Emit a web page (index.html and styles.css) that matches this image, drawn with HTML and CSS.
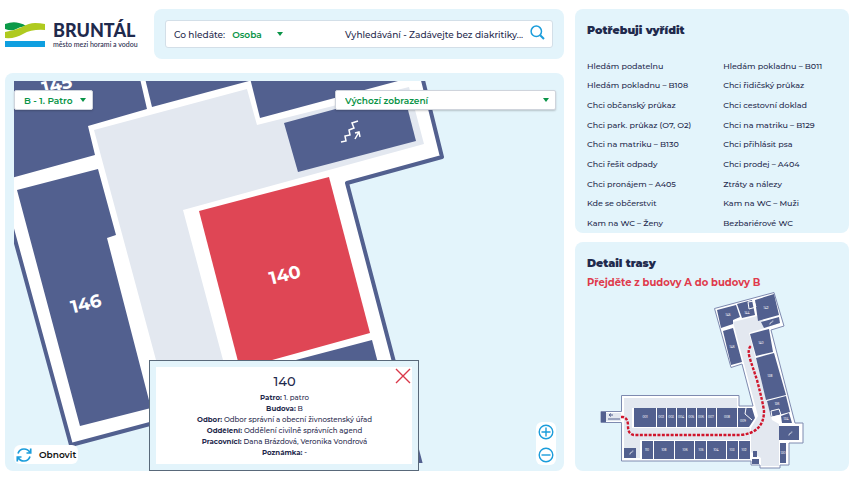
FILE: index.html
```
<!DOCTYPE html>
<html lang="cs">
<head>
    <meta charset="UTF-8">
    <meta name="viewport" content="width=device-width, initial-scale=1.0">
    <title>Bruntál - navigace</title>
    <link rel="stylesheet" href="styles.css">
</head>
<body>
    <div class="layout">
        <div class="left-side">
            <header class="main-header">
                <a href="index.html" class="logo">
                    <svg class="logo-mark" viewBox="0 0 40 25" aria-hidden="true">
                        <path d="M0 2Q8-1 14 1Q19 2 21 4Q14 5 9 8Q5 9 0 7Z" fill="#0b9a48"/>
                        <path d="M0 10Q9 9 17 5Q24 1 30 1Q35 1 40 2V8Q27 7 18 12Q10 17 0 16Z" fill="#afca1f"/>
                        <path d="M0 19H40V25H0Z" fill="#0f9fe0"/>
                    </svg>
                    <span class="logo-text">
                        <span class="brand-name">BRUNTÁL</span>
                        <span class="brand-claim">město mezi horami a vodou</span>
                    </span>
                </a>
                <div class="panel search-panel">
                    <form class="search">
                        <label for="searchType">Co hledáte:</label>
                        <span class="select-wrap search-type">
                            <select id="searchType">
                                <option>Osoba</option>
                            </select>
                        </span>
                        <input type="text" id="searchText" aria-label="Vyhledávání" placeholder="Vyhledávání - Zadávejte bez diakritiky...">
                        <button type="submit" class="icon-btn" aria-label="Hledat">
                            <svg width="15" height="15" viewBox="0 0 15 15" fill="none" stroke="#1b9ddb">
                                <circle cx="6.3" cy="6.3" r="5.2" stroke-width="1.5"/>
                                <path d="M10.2 10.2L14 14" stroke-width="2"/>
                            </svg>
                        </button>
                    </form>
                </div>
            </header>

            <main class="panel map-panel">
                <svg class="map" viewBox="14 81 542 382" preserveAspectRatio="xMidYMid slice" role="img" aria-label="Mapa patra">
                    <path class="wall" d="M-34 60L71 445L150 424L200 411L214 480H425L347 183L442 157L418 60Z"/>
                    <!-- corridor -->
                    <path class="floor" d="M94 130L247 89L257 125L409 87L424 144L183 210L223 360L240 420H172L156 360Z"/>
                    <!-- rooms -->
                    <path class="room" d="M0 70H138L147 109L88 126L95 155L0 181Z"/>
                    <path class="room" d="M143 70L152 107L290 70Z"/>
                    <path class="room" d="M248 70L260 118L398 81V70Z"/>
                    <path class="room" d="M284 123L402 91L408 110L416 141L298 172Z"/>
                    <path class="room" d="M17 190L98 169L116 235L107 238L151 408L80 426Z"/>
                    <path class="room selected" d="M199 211L329 177L370 333L240 369Z"/>
                    <path class="room" d="M243 374L372 340L404 463H270Z"/>
                    <path class="stairs" d="M341 142L346 141L345 136L350 135L349 130L354 128L352 123L358 121M355 139L359 132M355 133L359 132L360 137"/>
                    <text class="room-no" transform="translate(57 85) rotate(-14)">145</text>
                    <text class="room-no" transform="translate(86 304) rotate(-14)">146</text>
                    <text class="room-no" transform="translate(285 275) rotate(-14)">140</text>
                </svg>

                <span class="select-wrap floor-select">
                    <select aria-label="Patro">
                        <option>B - 1. Patro</option>
                    </select>
                </span>
                <span class="select-wrap view-select">
                    <select aria-label="Zobrazení">
                        <option>Výchozí zobrazení</option>
                    </select>
                </span>

                <button type="button" class="reset-btn">
                    <svg width="16" height="16" viewBox="0 0 16 16" fill="none" stroke="#1b9ddb" stroke-width="1.7">
                        <path d="M2 6.5Q3.500 2 8 2Q12 2 14 5.500M14.700 1.500V6H10.500M14 9.500Q12.500 14 8 14Q4 14 2 10.500M1.300 14.500V10H5.500"/>
                    </svg>
                    Obnovit
                </button>

                <div class="zoom-btns">
                    <button type="button" class="icon-btn" aria-label="Přiblížit">
                        <svg width="16" height="16" viewBox="0 0 16 16" fill="none" stroke="#1b9ddb" stroke-width="1.4">
                            <circle cx="8" cy="8" r="6.800"/>
                            <path d="M3.500 8H12.500M8 3.500V12.500"/>
                        </svg>
                    </button>
                    <button type="button" class="icon-btn" aria-label="Oddálit">
                        <svg width="16" height="16" viewBox="0 0 16 16" fill="none" stroke="#1b9ddb" stroke-width="1.4">
                            <circle cx="8" cy="8" r="6.800"/>
                            <path d="M3.500 8H12.500"/>
                        </svg>
                    </button>
                </div>

                <div class="popup">
                    <div class="popup-body">
                        <button type="button" class="icon-btn close-btn" aria-label="Zavřít">
                            <svg width="16" height="16" viewBox="0 0 16 16" stroke="#d9384a" stroke-width="1.4">
                                <path d="M1 1L15 15M15 1L1 15"/>
                            </svg>
                        </button>
                        <h2>140</h2>
                        <p><b>Patro:</b> 1. patro</p>
                        <p><b>Budova:</b> B</p>
                        <p><b>Odbor:</b> Odbor správní a obecní živnostenský úřad</p>
                        <p><b>Oddělení:</b> Oddělení civilně správních agend</p>
                        <p><b>Pracovníci:</b> Dana Brázdová, Veronika Vondrová</p>
                        <p><b>Poznámka:</b> -</p>
                    </div>
                </div>
            </main>
        </div>

        <aside class="right-side">
            <section class="panel side-panel">
                <h2>Potřebuji vyřídit</h2>
                <ul class="link-list">
                    <li><a href="#">Hledám podatelnu</a></li>
                    <li><a href="#">Hledám pokladnu – B011</a></li>
                    <li><a href="#">Hledám pokladnu – B108</a></li>
                    <li><a href="#">Chci řidičský průkaz</a></li>
                    <li><a href="#">Chci občanský průkaz</a></li>
                    <li><a href="#">Chci cestovní doklad</a></li>
                    <li><a href="#">Chci park. průkaz (O7, O2)</a></li>
                    <li><a href="#">Chci na matriku – B129</a></li>
                    <li><a href="#">Chci na matriku – B130</a></li>
                    <li><a href="#">Chci přihlásit psa</a></li>
                    <li><a href="#">Chci řešit odpady</a></li>
                    <li><a href="#">Chci prodej – A404</a></li>
                    <li><a href="#">Chci pronájem – A405</a></li>
                    <li><a href="#">Ztráty a nálezy</a></li>
                    <li><a href="#">Kde se občerstvit</a></li>
                    <li><a href="#">Kam na WC – Muži</a></li>
                    <li><a href="#">Kam na WC – Ženy</a></li>
                    <li><a href="#">Bezbariérové WC</a></li>
                </ul>
            </section>

            <section class="panel side-panel">
                <h2>Detail trasy</h2>
                <p class="route-step">Přejděte z budovy A do budovy B</p>
                <svg class="route-map" viewBox="587 292 250 178" role="img" aria-label="Trasa">
                    <path class="outline" d="M714.500 308.500L774 292.500L784 326L771 330L795 423H803V443H789V465H780V468H760V465H751V461H621.500V422.500H601V411.500H621.500V395.500H739V406H753L742 364L731 367.500Z"/>
                    <path class="floor" d="M606 413H621V421H606ZM624 398H737V408H624ZM624 398H632V445H624ZM624 428H750V440H640V458H624ZM733 322L757 316L765 322L780 323L749 333L772 420L779 424V466H761V458L751 452V428L758 416Z"/>
                    <g class="room">
                        <path d="M601 412H606V422H601ZM634 408H656V427H634ZM657 408H666V427H657ZM667 408H676V427H667ZM677 408H686V427H677ZM687 408H696V427H687ZM697 408H706V427H697ZM707 408H716V427H707ZM717 408H737V427H717ZM738 408H752L755 418L749 427H738Z"/>
                        <path d="M624 448H636V458H624ZM642 441H653V459H642ZM654 441H674V459H654ZM675 441H694V459H675ZM695 441H706V459H695ZM707 441H726V459H707ZM727 441H738V459H727ZM739 441H750V459H739Z"/>
                        <path d="M717 310L736 305L740 317L733 320V324L721 328ZM737 304L752 300L755 315L742 318ZM755 300L774 294L779 315L758 321ZM761 322L779 317L780 323L764 328ZM723 331L733 328L742 362L731 365ZM750 334L769 329L773 352L756 356ZM756 358L774 353L786 395L766 400ZM767 401L786 396L790 412L771 417ZM781 416L789 413L792 423H782Z"/>
                        <path d="M779 426H799V440H779ZM780 443H786V463H780ZM752 459H759V464H752ZM753 451H757V457H753Z"/>
                    </g>
                    <path class="divider" d="M748 302L754 301L756 307L749 309ZM771 411L779 409L781 415L772 417ZM746 408L745 414L752 420"/>
                    <g class="room-tag">
                        <text x="645" y="418">001</text>
                        <text x="661" y="418">002</text>
                        <text x="671" y="418">003</text>
                        <text x="681" y="418">004</text>
                        <text x="691" y="418">005</text>
                        <text x="701" y="418">006</text>
                        <text x="711" y="418">007</text>
                        <text x="727" y="418">008</text>
                        <text x="743" y="422">009</text>
                        <text x="647" y="451">110</text>
                        <text x="664" y="451">108</text>
                        <text x="685" y="451">106</text>
                        <text x="701" y="451">105</text>
                        <text x="716" y="451">104</text>
                        <text x="732" y="451">103</text>
                        <text x="744" y="451">102</text>
                        <text x="728" y="316">145</text>
                        <text x="747" y="314">144</text>
                        <text x="766" y="309">142</text>
                        <text x="732" y="348">146</text>
                        <text x="761" y="344">140</text>
                        <text x="770" y="377">138</text>
                        <text x="777" y="405">136</text>
                        <text x="786" y="420">134</text>
                        <text x="783" y="454">130</text>
                    </g>
                    <path class="stairs-small" d="M788 435h1.500v-1.500h1.500v-1.500h1.500M629 454h1.500v-1.500h1.500v-1.500h1.500M769 324h1.500v-1.500h1.500v-1.500h1.500"/>
                    <path class="entry-arrow" d="M613 415H609M611 413.500L609 415L611 416.500M608 419H620"/>
                    <path class="route" d="M621 417H623Q628 418 628 426Q628 435 635 435H740Q764 433 764 411Q763 403 757 380L750 359Q747 349 751 346"/>
                </svg>
            </section>
        </aside>
    </div>
</body>
</html>
```
FILE: styles.css
```
* {
    box-sizing: border-box;
}

body {
    font-family: Montserrat, Inter, sans-serif;
    font-size: 9px;
    font-weight: 500;
    margin: 0;
    color: #1f2a4d;
    background-color: #fff;
}

button, input, select {
    font: inherit;
    color: inherit;
    margin: 0;
    padding: 0;
    border: none;
    background: none;
}

a {
    color: inherit;
    text-decoration: none;
}

svg {
    display: block;
}

.layout {
    display: grid;
    grid-template-columns: 204fr 100fr;
    gap: 11px;
    min-height: 100vh;
    padding: 9px 5px;
}

.left-side {
    display: flex;
    flex-direction: column;
    gap: 14px;
}

.right-side {
    display: grid;
    grid-template-rows: 224fr 229fr;
    gap: 9px;
}

.panel {
    background-color: #e3f4fb;
    border-radius: 8px;
}

/* header */
.main-header {
    display: flex;
    gap: 20px;
}

.logo {
    display: flex;
    align-items: center;
    gap: 8px;
    width: 129px;
}

.logo-mark {
    width: 40px;
    height: 25px;
    flex-shrink: 0;
}

.logo-text {
    font-family: Lato, sans-serif;
    white-space: nowrap;
}

.brand-name {
    display: block;
    font-size: 18px;
    line-height: 20px;
    font-weight: 900;
}

.brand-claim {
    display: block;
    font-size: 7px;
    line-height: 9px;
}

.search-panel {
    flex: 1;
    padding: 11px;
}

.search {
    display: flex;
    align-items: center;
    height: 28px;
    padding: 0 7px 0 8px;
    border: 1px solid #d3dfe8;
    border-radius: 3px;
    background-color: #fff;
}

.search input {
    flex: 1;
    min-width: 0;
    text-align: right;
    outline: none;
}

.search input::placeholder {
    color: inherit;
    opacity: 1;
}

.search .icon-btn {
    margin: 0 0 3px 7px;
}

/* selects with green arrow */
.select-wrap {
    display: flex;
    align-items: center;
    color: #0a9447;
    font-weight: 600;
}

.select-wrap select {
    appearance: none;
    width: 100%;
    height: 100%;
    outline: none;
}

.select-wrap::after {
    content: "";
    flex-shrink: 0;
    border: 3px solid transparent;
    border-top: 4px solid #0a9447;
    border-bottom: none;
}

.search-type {
    width: 51px;
    margin-left: 7px;
}

.icon-btn {
    cursor: pointer;
}

/* map */
.map-panel {
    position: relative;
    flex: 1;
    display: flex;
    padding: 8px 8px 8px 9px;
}

.map {
    flex: 1;
    width: 100%;
    height: 100%;
    min-width: 0;
}

.wall {
    fill: #fff;
    stroke: #52608f;
    stroke-width: 4;
    stroke-linejoin: round;
}

.floor {
    fill: #e3e8f0;
}

.room {
    fill: #52608f;
}

.room.selected {
    fill: #df4655;
}

.room-no {
    fill: #fff;
    font-size: 18px;
    font-weight: 700;
    text-anchor: middle;
    dominant-baseline: central;
}

.stairs {
    fill: none;
    stroke: #fff;
    stroke-width: 1.5;
}

.floor-select, .view-select {
    position: absolute;
    top: 17px;
    height: 20px;
    padding: 0 6px 0 9px;
    border: 1px solid #cfd4dc;
    border-radius: 2px;
    background-color: #fff;
    box-shadow: 0 1px 2px rgba(0, 0, 0, 0.2);
}

.floor-select {
    left: 9px;
    width: 79px;
}

.view-select {
    right: 8px;
    width: 221px;
}

.reset-btn {
    position: absolute;
    left: 9px;
    bottom: 7px;
    display: flex;
    align-items: center;
    gap: 7px;
    height: 19px;
    padding: 0 2px;
    border-radius: 6px;
    background-color: #fff;
    color: #111;
    font-weight: 600;
}

.zoom-btns {
    position: absolute;
    right: 8px;
    bottom: 6px;
    display: flex;
    flex-direction: column;
    gap: 7px;
    padding: 2px;
    border-radius: 6px;
    background-color: #fff;
}

.popup {
    position: absolute;
    left: 0;
    right: 0;
    bottom: 0;
    width: 270px;
    margin: 0 auto;
    padding: 6px;
    border: 1px solid #59697a;
    background-color: #e3f4fb;
}

.popup-body {
    position: relative;
    padding: 6px 0;
    background-color: #fff;
    text-align: center;
    font-size: 7px;
    font-weight: 500;
}

.popup-body h2 {
    margin: 0 0 3px;
    font-size: 13px;
    line-height: 16px;
    font-weight: 500;
}

.popup-body p {
    margin: 0;
    line-height: 11px;
}

.close-btn {
    position: absolute;
    top: 1px;
    right: 1px;
}

/* right side */
.side-panel {
    display: flex;
    flex-direction: column;
    padding-left: 12px;
}

.side-panel h2 {
    margin: 13px 0 0;
    font-size: 11px;
    line-height: 16px;
    font-weight: 900;
}

.link-list {
    flex: 1;
    display: grid;
    grid-template-columns: 52% 48%;
    align-items: center;
    margin: 18px 0 0;
    padding: 0;
    list-style: none;
    font-size: 8px;
    line-height: 12px;
}

.route-step {
    margin: 4px 0 0;
    color: #df3a4c;
    font-size: 10px;
    line-height: 16px;
    font-weight: 700;
}

.route-map {
    flex: 1;
    width: 250px;
    max-width: 100%;
    min-height: 0;
}

.outline {
    fill: #fff;
    stroke: #7e8ab0;
    stroke-width: 1;
}

.divider {
    fill: none;
    stroke: #fff;
    stroke-width: 1;
}

.room-tag {
    fill: #fff;
    font-size: 3px;
    text-anchor: middle;
}

.stairs-small {
    fill: none;
    stroke: #fff;
    stroke-width: 0.5;
}

.entry-arrow {
    fill: none;
    stroke: #52608f;
    stroke-width: 1;
}

.route {
    fill: none;
    stroke: #d0152c;
    stroke-width: 2.4;
    stroke-dasharray: 3 1.4;
}
```
